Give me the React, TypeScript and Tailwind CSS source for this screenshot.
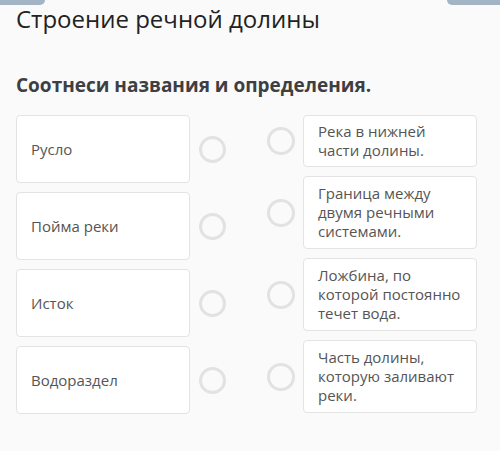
import React from "react";

const left = ["Русло", "Пойма реки", "Исток", "Водораздел"];
const right = [
  "Река в нижней части долины.",
  "Граница между двумя речными системами.",
  "Ложбина, по которой постоянно течет вода.",
  "Часть долины, которую заливают реки.",
];

export default function App() {
  return (
    <div
      className="relative w-[500px] h-[451px] bg-[#fafafa] overflow-hidden"
      style={{ fontFamily: '"Open Sans", "Noto Sans", sans-serif' }}
    >
      <div className="absolute left-0 top-0 w-[45px] h-[5px] bg-[#a3b4c4] rounded-br-[5px]" />
      <div className="absolute right-0 top-0 w-[53px] h-[5px] bg-[#a3b4c4] rounded-bl-[5px]" />
      <div className="pl-4 pt-[2px]">
        <h1 className="text-[24px] leading-[34px] text-[#222] font-normal">Строение речной долины</h1>
        <h2 className="mt-[37px] text-[19px] leading-[24px] font-bold text-[#3d3f42]">
          Соотнеси названия и определения.
        </h2>
      </div>
      <div className="flex mt-[18px] pl-4">
        <div className="flex flex-col gap-[9px]">
          {left.map((t) => (
            <div key={t} className="flex items-center">
              <div className="w-[174px] h-[68px] bg-white border border-[#e3e3e3] rounded-[4px] flex items-center px-[14px] text-[15px] text-[#555]">
                {t}
              </div>
              <div className="ml-[9px] w-[27px] h-[27px] rounded-full border-[3px] border-[#e2e2e2]" />
            </div>
          ))}
        </div>
        <div className="ml-[41px] flex flex-col gap-[9px]">
          {right.map((t, i) => (
            <div key={t} className="flex items-center">
              <div className="w-[28px] h-[28px] rounded-full border-[3px] border-[#e2e2e2]" />
              <div
                className={`ml-[8px] w-[174px] bg-white border border-[#e3e3e3] rounded-[4px] px-[14px] text-[15px] leading-[19px] text-[#555] ${
                  i === 0 ? "py-[6px]" : "py-[7px]"
                }`}
              >
                {t}
              </div>
            </div>
          ))}
        </div>
      </div>
    </div>
  );
}
